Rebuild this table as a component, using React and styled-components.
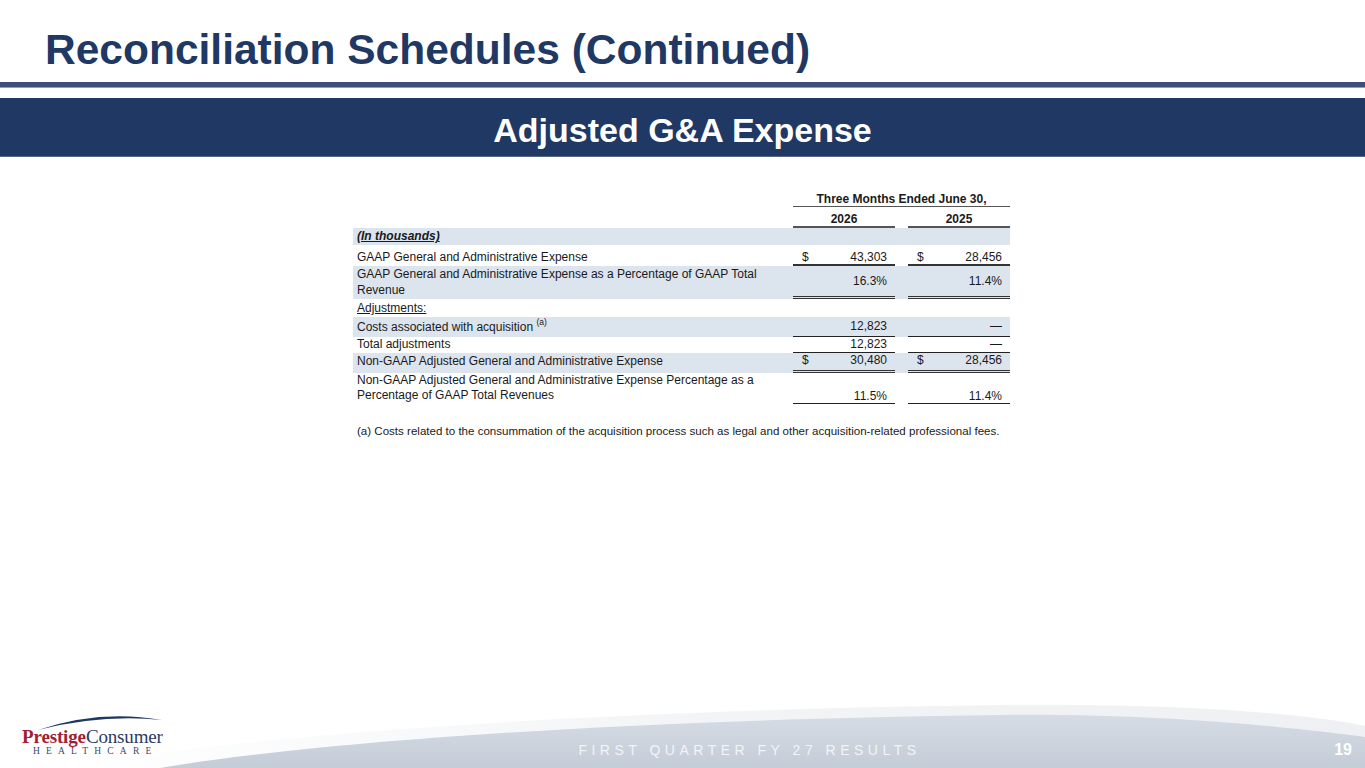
import React from 'react';
import styled, { createGlobalStyle } from 'styled-components';

const GlobalStyle = createGlobalStyle`
  html, body {
    margin: 0;
    padding: 0;
    background: #ffffff;
  }
  body {
    font-family: 'Liberation Sans', Arial, sans-serif;
  }
`;

export default function App() {
  return (
    <>
      <GlobalStyle />
      <Slide>
        <Title>Reconciliation Schedules (Continued)</Title>
        <Rule />
        <Banner>Adjusted G&amp;A Expense</Banner>

        <TableWrap>
          <Row>
            <Cell />
            <HeadSpan>Three Months Ended June 30,</HeadSpan>
          </Row>
          <Row $pad="5px 0 0">
            <Cell />
            <YearCell>2026</YearCell>
            <Cell />
            <YearCell>2025</YearCell>
          </Row>

          <Row $shaded>
            <Label $line={17}>
              <Caption>(In thousands)</Caption>
            </Label>
          </Row>

          {/* GAAP G&A */}
          <Row>
            <Label $line={14} $pt={5}>GAAP General and Administrative Expense</Label>
            <Value $pt={5} $border="2px solid #333">
              <span>$</span>
              <span>43,303</span>
            </Value>
            <Cell />
            <Value $pt={5} $border="2px solid #333">
              <span>$</span>
              <span>28,456</span>
            </Value>
          </Row>

          {/* GAAP % */}
          <Row $shaded>
            <Label $line={16} $pb={1}>
              GAAP General and Administrative Expense as a Percentage of GAAP Total
              <br />
              Revenue
            </Label>
            <Value $border="3px double #333" $align="center" $right>
              <span>16.3%</span>
            </Value>
            <Cell />
            <Value $border="3px double #333" $align="center" $right>
              <span>11.4%</span>
            </Value>
          </Row>

          <Row>
            <Label $line={18}>
              <Under>Adjustments:</Under>
            </Label>
          </Row>

          <Row $shaded>
            <Label $line={17} $pt={2} $pb={1}>
              Costs associated with acquisition <Sup>(a)</Sup>
            </Label>
            <Value $pt={2} $border="1px solid #222" $right>
              <span>12,823</span>
            </Value>
            <Cell />
            <Value $pt={2} $border="1px solid #222" $right>
              <span>—</span>
            </Value>
          </Row>

          <Row>
            <Label $line={14} $pb={2}>Total adjustments</Label>
            <Value $pb={1} $border="1px solid #222" $right>
              <span>12,823</span>
            </Value>
            <Cell />
            <Value $pb={1} $border="1px solid #222" $right>
              <span>—</span>
            </Value>
          </Row>

          <Row $shaded>
            <Label $line={16} $pb={4}>Non-GAAP Adjusted General and Administrative Expense</Label>
            <Value $pb={1} $border="3px double #333">
              <span>$</span>
              <span>30,480</span>
            </Value>
            <Cell />
            <Value $pb={1} $border="3px double #333">
              <span>$</span>
              <span>28,456</span>
            </Value>
          </Row>

          <Row>
            <Label $line={15} $pb={1}>
              Non-GAAP Adjusted General and Administrative Expense Percentage as a
              <br />
              Percentage of GAAP Total Revenues
            </Label>
            <Value $border="1px solid #222" $align="flex-end" $right>
              <span>11.5%</span>
            </Value>
            <Cell />
            <Value $border="1px solid #222" $align="flex-end" $right>
              <span>11.4%</span>
            </Value>
          </Row>

          <Footnote>
            (a) Costs related to the consummation of the acquisition process such as legal and other
            acquisition-related professional fees.
          </Footnote>
        </TableWrap>

        <Footer>
          <Wave viewBox="0 0 1365 70" preserveAspectRatio="none" aria-hidden="true">
            <defs>
              <linearGradient id="waveGray" x1="0" y1="0" x2="0" y2="1">
                <stop offset="0" stopColor="#d6dce4" />
                <stop offset="1" stopColor="#c4ccd7" />
              </linearGradient>
              <linearGradient id="waveLight" x1="0" y1="0" x2="1" y2="0">
                <stop offset="0" stopColor="#ffffff" />
                <stop offset="0.5" stopColor="#f2f4f6" />
                <stop offset="1" stopColor="#eef0f3" />
              </linearGradient>
            </defs>
            <path d="M60 70 C 250 36, 600 12, 1000 7 C 1200 5, 1320 18, 1365 28 L1365 70 Z" fill="url(#waveLight)" />
            <path d="M160 70 C 300 46, 600 22, 1000 17 C 1160 15, 1300 30, 1365 39 L1365 70 Z" fill="url(#waveGray)" />
          </Wave>

          <Logo>
            <LogoArc viewBox="0 0 140 16" aria-hidden="true">
              <path d="M16 16 Q 78 -5 140 6 Q 80 0 16 16 Z" fill="#1f3864" />
            </LogoArc>
            <LogoName>
              <Prestige>Prestige</Prestige>
              <Consumer>Consumer</Consumer>
            </LogoName>
            <LogoSub>HEALTHCARE</LogoSub>
          </Logo>
          <Tagline>FIRST QUARTER FY 27 RESULTS</Tagline>
          <PageNum>19</PageNum>
        </Footer>
      </Slide>
    </>
  );
}

const Slide = styled.div`
  width: 1365px;
  height: 768px;
  overflow: hidden;
  display: flex;
  flex-direction: column;
  background: #ffffff;
  color: #1a1a1a;
`;

const Title = styled.h1`
  margin: 0;
  padding: 26px 0 0 45px;
  font-size: 42.5px;
  font-weight: bold;
  color: #1f3864;
  line-height: 47px;
  white-space: nowrap;
`;

const Rule = styled.div`
  margin-top: 9px;
  height: 5px;
  background: #3b5077;
  border-bottom: 1px solid #8e9cb6;
`;

const Banner = styled.div`
  margin-top: 10px;
  height: 59px;
  box-sizing: border-box;
  padding-top: 5px;
  display: flex;
  align-items: center;
  justify-content: center;
  background: #1f3864;
  border-bottom: 1px solid #56688a;
  color: #ffffff;
  font-size: 34px;
  font-weight: bold;
  line-height: 38px;
`;

const TableWrap = styled.div`
  margin: 34px 0 0 353px;
  width: 657px;
  font-size: 12px;
  color: #1a1a1a;
`;

const Row = styled.div`
  display: grid;
  grid-template-columns: 440px 102px 13px 102px;
  padding: ${p => p.$pad || '0'};
  background: ${p => (p.$shaded ? '#dce4ee' : 'transparent')};
`;

const Cell = styled.div``;

const HeadSpan = styled.div`
  grid-column: 2 / 5;
  text-align: center;
  font-weight: bold;
  line-height: 14px;
  padding-top: 1px;
  border-bottom: 1px solid #555;
`;

const YearCell = styled.div`
  text-align: center;
  font-weight: bold;
  line-height: 14px;
  border-bottom: 2px solid #555;
`;

const Label = styled.div`
  padding: ${p => p.$pt || 0}px 0 ${p => p.$pb || 0}px 4px;
  line-height: ${p => p.$line}px;
  white-space: nowrap;
`;

const Caption = styled.span`
  font-weight: bold;
  font-style: italic;
  text-decoration: underline;
`;

const Under = styled.span`
  text-decoration: underline;
`;

const Sup = styled.sup`
  font-size: 8.5px;
  line-height: 0;
  vertical-align: 6px;
`;

const Value = styled.div`
  display: flex;
  align-items: ${p => p.$align || 'stretch'};
  justify-content: ${p => (p.$right ? 'flex-end' : 'space-between')};
  padding: ${p => p.$pt || 0}px 8px ${p => p.$pb || 0}px 9px;
  line-height: 14px;
  border-bottom: ${p => p.$border || 'none'};
`;

const Footnote = styled.p`
  margin: 19px 0 0 4px;
  font-size: 11.55px;
  line-height: 16px;
  white-space: nowrap;
`;

const Footer = styled.div`
  margin-top: auto;
  height: 70px;
  position: relative;
  display: grid;
  grid-template-columns: 200px 1fr 60px;
  align-items: end;
`;

const Wave = styled.svg`
  position: absolute;
  inset: 0;
  width: 100%;
  height: 100%;
  z-index: 0;
`;

const Logo = styled.div`
  position: relative;
  z-index: 1;
  padding: 0 0 11px 22px;
  display: flex;
  flex-direction: column;
  font-family: 'Liberation Serif', 'Times New Roman', serif;
`;

const LogoArc = styled.svg`
  width: 140px;
  height: 16px;
  display: block;
  margin-bottom: -3px;
`;

const LogoName = styled.div`
  font-size: 19px;
  line-height: 19px;
  letter-spacing: -0.15px;
  white-space: nowrap;
`;

const Prestige = styled.span`
  color: #a01f33;
  font-weight: bold;
`;

const Consumer = styled.span`
  color: #2b3c63;
`;

const LogoSub = styled.div`
  padding-left: 11px;
  font-size: 9.5px;
  line-height: 11px;
  letter-spacing: 6.2px;
  color: #3a4766;
  white-space: nowrap;
`;

const Tagline = styled.div`
  position: relative;
  z-index: 1;
  justify-self: center;
  padding: 0 6px 11px 0;
  font-size: 14px;
  line-height: 14px;
  letter-spacing: 4.5px;
  color: #f2f4f7;
  white-space: nowrap;
`;

const PageNum = styled.div`
  position: relative;
  z-index: 1;
  justify-self: end;
  padding: 0 13px 10px 0;
  font-size: 16px;
  line-height: 16px;
  font-weight: bold;
  color: #ffffff;
`;
